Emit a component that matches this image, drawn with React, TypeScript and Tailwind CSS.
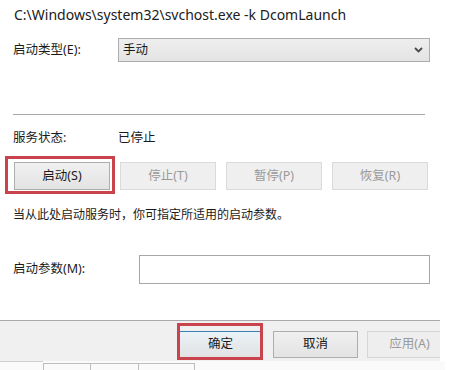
import React from 'react';

const FONT = { fontFamily: '"Noto Sans", "Noto Sans CJK SC", sans-serif' };

// 服务控制按钮（启动 / 停止 / 暂停 / 恢复）
const ServiceButton: React.FC<{ label: string; disabled?: boolean }> = ({ label, disabled }) => (
  <div
    className={
      disabled
        ? 'h-[28px] flex items-center justify-center border border-[#dadada] bg-[#efefef] text-[#9a9a9a] text-[12.5px]'
        : 'h-[28px] flex items-center justify-center border border-[#adadad] bg-gradient-to-b from-[#f0f0f0] to-[#e3e3e3] text-[#1a1a1a] text-[12.5px]'
    }
  >
    {label}
  </div>
);

export default function App() {
  return (
    <div className="relative w-[449px] h-[370px] bg-white overflow-hidden text-[#1a1a1a]" style={FONT}>
      <div className="h-[29px] pl-[14px] flex items-center text-[14px] text-[#202020]">
        C:\Windows\system32\svchost.exe -k DcomLaunch
      </div>

      {/* 启动类型 */}
      <div className="mt-[9px] h-[24px] flex items-center">
        <div className="w-[118px] pl-[13px] text-[12.5px]">启动类型(E):</div>
        <div className="w-[312px] h-[24px] flex items-center justify-between border border-[#adadad] bg-gradient-to-b from-[#eeeeee] to-[#e4e4e4] pl-[4px] pr-[6px] text-[12.5px]">
          <span>手动</span>
          <svg width="9" height="6" viewBox="0 0 9 6">
            <path d="M1 1 L4.5 4.5 L8 1" fill="none" stroke="#4a4a4a" strokeWidth="1.8" />
          </svg>
        </div>
      </div>

      <div className="mt-[52px] ml-[13px] w-[412px] h-px bg-[#a8a8a8]" />

      {/* 服务状态 */}
      <div className="mt-[13px] h-[20px] flex items-center text-[12.5px]">
        <div className="w-[118px] pl-[13px]">服务状态:</div>
        <div>已停止</div>
      </div>

      <div className="mt-[14px] ml-[14px] w-[414px] grid grid-cols-4 gap-x-[10px]">
        <div className="relative">
          <ServiceButton label="启动(S)" />
          <div className="absolute -left-[9px] -right-[5px] -top-[6px] -bottom-[4px] border-[3px] border-[#c8434b]" />
        </div>
        <ServiceButton label="停止(T)" disabled />
        <ServiceButton label="暂停(P)" disabled />
        <ServiceButton label="恢复(R)" disabled />
      </div>

      <div className="mt-[15px] h-[20px] pl-[13px] flex items-center text-[12px]">
        当从此处启动服务时，你可指定所适用的启动参数。
      </div>

      {/* 启动参数 */}
      <div className="mt-[30px] h-[29px] flex items-center">
        <div className="w-[139px] pl-[13px] text-[12.5px]">启动参数(M):</div>
        <div className="w-[291px] h-[29px] border border-[#a6a6a6] bg-white" />
      </div>

      {/* 底部按钮栏 */}
      <div className="mt-[36px] w-[440px] h-px bg-[#a9a9a9]" />
      <div className="w-[440px] h-[40px] bg-[#f0f0f0] overflow-hidden pt-[10px] pl-[178px] flex gap-x-[10px] text-[12.5px]">
        <div className="relative shrink-0 w-[85px] h-[27px]">
          <div className="w-full h-full flex items-center justify-center border border-[#3c7fb1] bg-gradient-to-b from-[#eaf2f8] to-[#e2e2e2] text-[#1a1a1a]">
            确定
          </div>
          <div className="absolute -left-px -right-0 -top-[8px] -bottom-[2px] border-[3px] border-[#c8434b]" />
        </div>
        <div className="shrink-0 w-[85px] h-[27px] flex items-center justify-center border border-[#adadad] bg-gradient-to-b from-[#f0f0f0] to-[#e3e3e3]">
          取消
        </div>
        <div className="shrink-0 w-[85px] h-[27px] -ml-[1px] flex items-center justify-center border border-[#d6d6d6] bg-[#eeeeee] text-[#9a9a9a]">
          应用(A)
        </div>
      </div>

      {/* 底部标签条 */}
      <div className="flex h-[9px] w-[445px] bg-[#fafafa]">
        <div className="w-[43px] border-t border-[#cfcfcf]" />
        <div className="w-[47px] mt-[2px] border-t border-l border-[#bdbdbd]" />
        <div className="w-[48px] mt-[2px] border-t border-l border-[#bdbdbd]" />
        <div className="w-[57px] mt-[2px] border-t border-l border-r border-[#bdbdbd]" />
      </div>
    </div>
  );
}
